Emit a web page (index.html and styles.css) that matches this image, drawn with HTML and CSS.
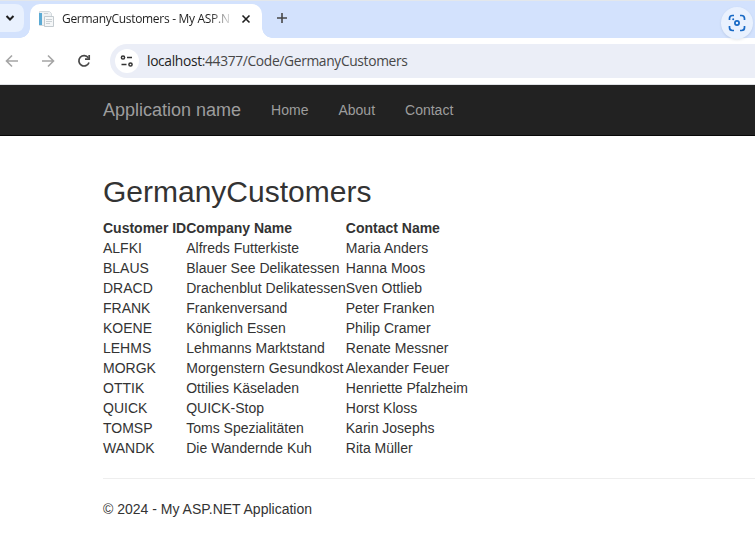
FILE: index.html
```html
<!DOCTYPE html>
<html lang="en">
<head>
<meta charset="utf-8">
<title>GermanyCustomers - My ASP.NET Application</title>
<link rel="stylesheet" href="styles.css">
</head>
<body>
<header class="browser">
  <div class="tabstrip">
    <div class="tab-search"><svg width="30" height="38" viewBox="0 0 30 38"><path class="search-bg" d="M0 4H15Q24 4 24 13V23Q24 32 15 32H0Z"/><path class="chevron" d="M6.500 16L10 19.500L13.500 16"/></svg></div>
    <div class="tab">
      <svg class="favicon" width="16" height="16" viewBox="0 0 16 16"><path fill="#eef1f3" stroke="#d3d9dd" d="M1.500 .5H11.500L13.500 2.500V14.500H1.500Z"/><path fill="#5baad4" d="M1 2H4V14H1Z"/><path fill="#f5f7f8" stroke="#c3cacf" d="M6.500 5.500H15.500V15.500H6.500Z"/><path stroke="#cbd1d5" d="M6 2.500H10M8 8.500H14M8 10.500H14M8 12.500H12"/></svg>
      <span class="tab-title">GermanyCustomers - My ASP.N</span>
      <svg class="close" width="10" height="10" viewBox="0 0 10 10"><path d="M1.500 1.500L8.500 8.500M8.500 1.500L1.500 8.500"/></svg>
    </div>
    <svg class="new-tab" width="12" height="12" viewBox="0 0 12 12"><path d="M6 1V11M1 6H11"/></svg>
    <svg class="lens" width="38" height="40" viewBox="0 0 38 40"><circle class="lens-bg" cx="20" cy="20" r="16"/><g class="lens-mark"><path d="M12.500 17V15.500Q12.500 12.500 15.500 12.500H17M23 12.500H24.500Q27.500 12.500 27.500 15.500V17M12.500 23V24.500Q12.500 27.500 15.500 27.500H17M23 27.500H24.500Q27.500 27.500 27.500 24.500V23"/><circle cx="20" cy="20" r="2.100"/></g><circle class="lens-dot" cx="16.200" cy="16.200" r="1"/></svg>
  </div>
  <div class="toolbar">
    <svg class="nav-icon" width="14" height="14" viewBox="0 0 14 14"><path d="M13 7H1.500M7 1.500L1.500 7L7 12.500"/></svg>
    <svg class="nav-icon forward" width="14" height="14" viewBox="0 0 14 14"><path d="M1 7H12.500M7 1.500L12.500 7L7 12.500"/></svg>
    <svg class="reload" width="14" height="14" viewBox="0 0 14 14"><path d="M11.300 3.700A5.200 5.200 0 1 0 12 8.500"/><path d="M12.200 1V5.200H8"/></svg>
    <div class="omnibox">
      <span class="site-info"><svg width="14" height="12" viewBox="0 0 14 12"><path d="M7 2.500H12M1.500 9.500H6.500"/><circle cx="3" cy="2.500" r="1.600"/><circle cx="10.500" cy="9.500" r="1.600"/></svg></span>
      <span class="url"><span class="host">localhost</span>:44377/Code/GermanyCustomers</span>
    </div>
  </div>
</header>
<nav class="navbar">
  <a class="brand">Application name</a>
  <a>Home</a><a>About</a><a>Contact</a>
</nav>
<main class="content">
  <h2>GermanyCustomers</h2>
  <table>
    <thead><tr><th>Customer ID</th><th>Company Name</th><th>Contact Name</th></tr></thead>
    <tbody>
      <tr><td>ALFKI</td><td>Alfreds Futterkiste</td><td>Maria Anders</td></tr>
      <tr><td>BLAUS</td><td>Blauer See Delikatessen</td><td>Hanna Moos</td></tr>
      <tr><td>DRACD</td><td>Drachenblut Delikatessen</td><td>Sven Ottlieb</td></tr>
      <tr><td>FRANK</td><td>Frankenversand</td><td>Peter Franken</td></tr>
      <tr><td>KOENE</td><td>Königlich Essen</td><td>Philip Cramer</td></tr>
      <tr><td>LEHMS</td><td>Lehmanns Marktstand</td><td>Renate Messner</td></tr>
      <tr><td>MORGK</td><td>Morgenstern Gesundkost</td><td>Alexander Feuer</td></tr>
      <tr><td>OTTIK</td><td>Ottilies Käseladen</td><td>Henriette Pfalzheim</td></tr>
      <tr><td>QUICK</td><td>QUICK-Stop</td><td>Horst Kloss</td></tr>
      <tr><td>TOMSP</td><td>Toms Spezialitäten</td><td>Karin Josephs</td></tr>
      <tr><td>WANDK</td><td>Die Wandernde Kuh</td><td>Rita Müller</td></tr>
    </tbody>
  </table>
  <hr>
  <footer>© 2024 - My ASP.NET Application</footer>
</main>
</body>
</html>
```
FILE: styles.css
```css
* { box-sizing: border-box; }
body {
  margin: 0;
  height: 540px;
  overflow: hidden;
  background: #fff;
  color: #333;
  font: 14px/20px "Liberation Sans", Arial, sans-serif;
}
svg { display: block; flex: none; fill: none; }

.browser { font-family: "Open Sans", "Noto Sans", sans-serif; }
.tabstrip {
  position: relative;
  display: flex;
  height: 38px;
  background: #d3e2fd;
  border-top: 1px solid #e3e7eb;
}
.tab-search { width: 30px; height: 38px; margin-top: -1px; }
.search-bg { fill: #e9f1fe; }
.chevron { stroke: #1f1f1f; stroke-width: 2; }
.tab {
  position: relative;
  display: flex;
  align-items: center;
  width: 232px;
  height: 34px;
  margin-top: 3px;
  padding: 0 11px 4px 8px;
  background: #fff;
  border-radius: 10px 10px 0 0;
}
.tab::before, .tab::after {
  content: "";
  position: absolute;
  bottom: 0;
  width: 10px;
  height: 10px;
}
.tab::before { left: -10px; background: radial-gradient(circle at 0 0, transparent 9.5px, #fff 10px); }
.tab::after { right: -10px; background: radial-gradient(circle at 100% 0, transparent 9.5px, #fff 10px); }
.tab-title {
  width: 169px;
  margin-left: 8px;
  white-space: nowrap;
  color: #1f1f1f;
  font-size: 12px;
  letter-spacing: -0.3px;
  -webkit-mask-image: linear-gradient(90deg, #000 148px, transparent 172px);
  mask-image: linear-gradient(90deg, #000 148px, transparent 172px);
}
.close { margin-left: 10px; stroke: #1f1f1f; stroke-width: 1.6; }
.new-tab { margin: 11px 0 0 14px; stroke: #474747; stroke-width: 1.6; }
.lens { position: absolute; left: 717px; top: 2px; z-index: 1; filter: drop-shadow(0 1px 1px rgba(60, 80, 110, .15)); }
.lens-bg { fill: #e9f1fe; }
.lens-mark { stroke: #1769c5; stroke-width: 1.7; }
.lens-dot { fill: #1769c5; }

.toolbar {
  display: flex;
  align-items: center;
  height: 47px;
  padding-left: 5px;
  border-bottom: 1px solid #dfe1e5;
}
.nav-icon { stroke: #a5a5a5; stroke-width: 1.6; }
.forward { margin-left: 22px; }
.reload { margin-left: 22px; stroke: #474747; stroke-width: 1.7; }
.omnibox {
  display: flex;
  align-items: center;
  flex: 1;
  height: 34px;
  margin-left: 19px;
  padding-left: 5px;
  border-radius: 17px 0 0 17px;
  background: #ebeef7;
}
.site-info {
  display: grid;
  place-items: center;
  width: 24px;
  height: 24px;
  border-radius: 50%;
  background: #fff;
}
.site-info svg { stroke: #333; stroke-width: 1.5; }
.url { margin-left: 8px; color: #474747; font-size: 13.8px; letter-spacing: -0.34px; }
.host { color: #1f1f1f; }

.navbar {
  display: flex;
  align-items: center;
  height: 51px;
  padding-left: 103px;
  background: #222;
  border-bottom: 1px solid #080808;
  color: #9d9d9d;
}
.navbar a + a { margin-left: 30px; }
.brand { font-size: 18px; }

.content { padding: 39px 0 0 103px; }
h2 { margin: 0 0 10px; font-size: 30px; font-weight: 500; line-height: 33px; }
table { border-collapse: collapse; border-spacing: 0; }
th, td { padding: 0; text-align: left; white-space: nowrap; }
hr { height: 1px; margin: 20px 0; border: 0; background: #eee; }
```
